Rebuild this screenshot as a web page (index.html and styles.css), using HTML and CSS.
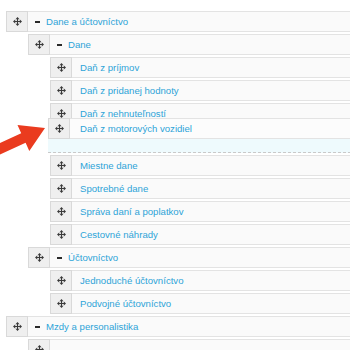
FILE: index.html
```html
<!DOCTYPE html>
<html>
<head>
<meta charset="utf-8">
<link rel="stylesheet" href="styles.css">
</head>
<body>
<svg width="0" height="0" class="defs">
  <defs>
    <symbol id="mv" viewBox="0 0 10 10">
      <rect x="4.4" y="1.5" width="1.2" height="7" fill="#3a3a3a"/>
      <rect x="1.5" y="4.4" width="7" height="1.2" fill="#3a3a3a"/>
      <polygon points="5,0 2.8,2.4 7.2,2.4" fill="#3a3a3a"/>
      <polygon points="5,10 2.8,7.6 7.2,7.6" fill="#3a3a3a"/>
      <polygon points="0,5 2.4,2.8 2.4,7.2" fill="#3a3a3a"/>
      <polygon points="10,5 7.6,2.8 7.6,7.2" fill="#3a3a3a"/>
    </symbol>
  </defs>
</svg>
<div class="tree">
  <ul class="list">
    <li>
      <div class="row"><span class="handle"><svg><use href="#mv"/></svg></span><span class="label"><span class="toggle"></span><a>Dane a účtovníctvo</a></span></div>
      <ul class="list">
        <li>
          <div class="row"><span class="handle"><svg><use href="#mv"/></svg></span><span class="label"><span class="toggle"></span><a>Dane</a></span></div>
          <ul class="list">
            <li><div class="row"><span class="handle"><svg><use href="#mv"/></svg></span><span class="label leaf"><a>Daň z príjmov</a></span></div></li>
            <li><div class="row"><span class="handle"><svg><use href="#mv"/></svg></span><span class="label leaf"><a>Daň z pridanej hodnoty</a></span></div></li>
            <li><div class="row"><span class="handle"><svg><use href="#mv"/></svg></span><span class="label leaf"><a>Daň z nehnuteľností</a></span></div></li>
            <li class="placeholder"></li>
            <li><div class="row"><span class="handle"><svg><use href="#mv"/></svg></span><span class="label leaf"><a>Miestne dane</a></span></div></li>
            <li><div class="row"><span class="handle"><svg><use href="#mv"/></svg></span><span class="label leaf"><a>Spotrebné dane</a></span></div></li>
            <li><div class="row"><span class="handle"><svg><use href="#mv"/></svg></span><span class="label leaf"><a>Správa daní a poplatkov</a></span></div></li>
            <li><div class="row"><span class="handle"><svg><use href="#mv"/></svg></span><span class="label leaf"><a>Cestovné náhrady</a></span></div></li>
          </ul>
        </li>
        <li>
          <div class="row"><span class="handle"><svg><use href="#mv"/></svg></span><span class="label"><span class="toggle"></span><a>Účtovníctvo</a></span></div>
          <ul class="list">
            <li><div class="row"><span class="handle"><svg><use href="#mv"/></svg></span><span class="label leaf"><a>Jednoduché účtovníctvo</a></span></div></li>
            <li><div class="row"><span class="handle"><svg><use href="#mv"/></svg></span><span class="label leaf"><a>Podvojné účtovníctvo</a></span></div></li>
          </ul>
        </li>
      </ul>
    </li>
    <li>
      <div class="row"><span class="handle"><svg><use href="#mv"/></svg></span><span class="label"><span class="toggle"></span><a>Mzdy a personalistika</a></span></div>
      <ul class="list">
        <li><div class="row"><span class="handle"><svg><use href="#mv"/></svg></span><span class="label leaf"><a>&nbsp;</a></span></div></li>
      </ul>
    </li>
  </ul>
  <div class="row dragging"><span class="handle"><svg><use href="#mv"/></svg></span><span class="label leaf"><a>Daň z motorových vozidiel</a></span></div>
  <svg class="arrow" width="60" height="170" viewBox="0 0 60 170">
    <polygon points="45,128 17.5,125 21.2,133.2 -15.4,150 -11,159.5 25.6,142.8 29.3,151" fill="#ea3b1f"/>
  </svg>
</div>
</body>
</html>
```
FILE: styles.css
```css
html, body {
  margin: 0;
  padding: 0;
  background: #ffffff;
  overflow: hidden;
}
.defs {
  position: absolute;
}
.tree {
  position: relative;
  width: 370px;
  padding: 11px 0 0 6px;
  font-family: "Liberation Sans", Arial, sans-serif;
  font-size: 9.6px;
}
.list {
  list-style: none;
  margin: 0;
  padding: 0;
}
.list .list {
  padding-left: 22px;
}
.row {
  display: flex;
  height: 21px;
  margin-bottom: 2px;
}
.handle {
  box-sizing: border-box;
  width: 22px;
  height: 21px;
  flex: none;
  background: #efefef;
  border: 1px solid #d9d9d9;
  display: flex;
  align-items: center;
  justify-content: center;
}
.handle svg {
  width: 9px;
  height: 9px;
}
.label {
  flex: 1;
  box-sizing: border-box;
  height: 21px;
  display: flex;
  align-items: center;
  background: #fafafa;
  border-top: 1px solid #e3e3e3;
  border-bottom: 1px solid #e3e3e3;
  padding-left: 7px;
}
.label.leaf {
  padding-left: 8px;
}
.label a {
  color: #2ea4d8;
}
.toggle {
  width: 5px;
  height: 2px;
  background: #2a2a2a;
  margin-right: 6px;
}
.placeholder {
  box-sizing: border-box;
  height: 27px;
  margin: 0 0 2px -2px;
  background: #eefafd;
  border-bottom: 1px dashed #c9c9c9;
}
.dragging {
  position: absolute;
  left: 48px;
  top: 118px;
  width: 320px;
  margin: 0;
}
.dragging .label {
  background: #fcfcfc;
  padding-left: 10px;
}
.arrow {
  position: absolute;
  left: 0;
  top: 0;
}
```
